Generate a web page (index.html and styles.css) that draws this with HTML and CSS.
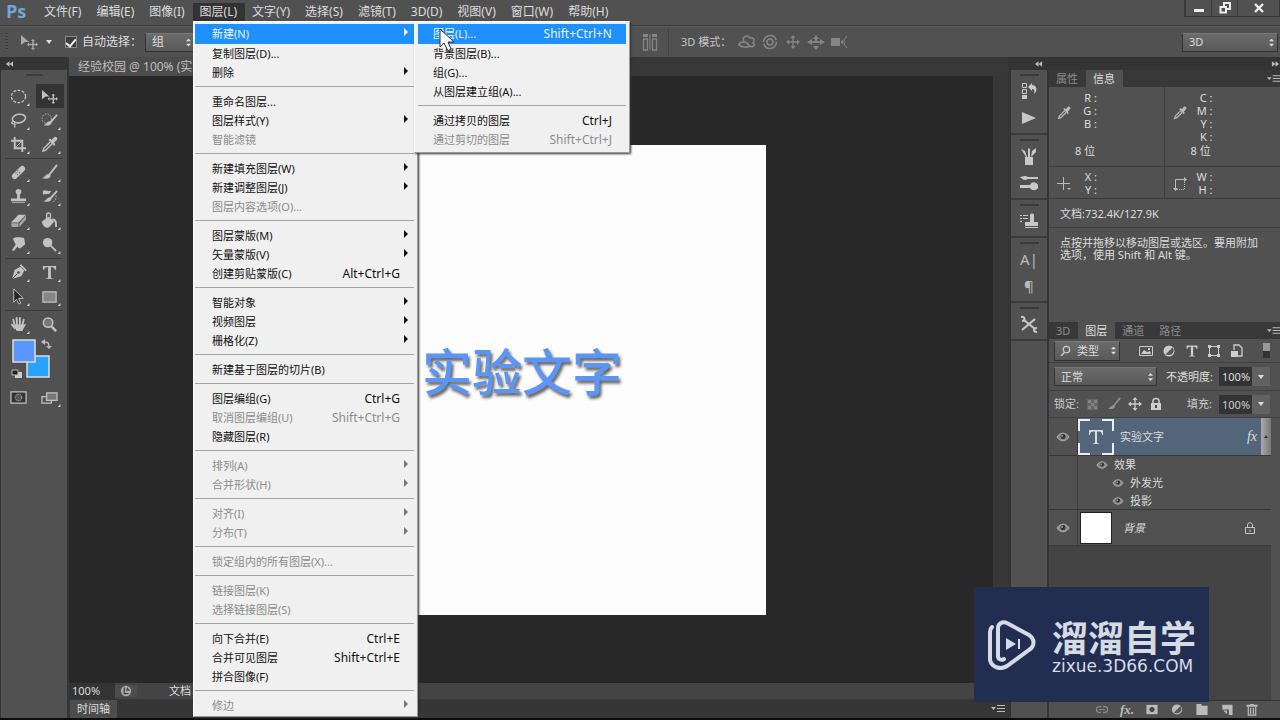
FILE: index.html
```html
<!DOCTYPE html>
<html lang="zh-CN">
<head>
<meta charset="utf-8">
<title>Photoshop</title>
<link rel="stylesheet" href="styles.css">
</head>
<body>
<svg class="sprite" aria-hidden="true">
  <symbol id="move" viewBox="0 0 18 18"><path fill="currentColor" d="M1 2l8 7H5L1 12z"/><path stroke="currentColor" stroke-width="1.4" d="M13 7v9M9 11.500h8"/><path fill="currentColor" d="M11 8l2-2 2 2zM11 15h4l-2 2zM9 9.500v4l-2-2zM16 9.500v4l2-2z"/></symbol>
  <symbol id="marquee" viewBox="0 0 18 18"><ellipse cx="9" cy="9" rx="7.500" ry="6.500" fill="none" stroke="currentColor" stroke-width="1.400" stroke-dasharray="3 1.500"/></symbol>
  <symbol id="lasso" viewBox="0 0 18 18"><ellipse cx="9.500" cy="7" rx="7" ry="4.500" transform="rotate(-10 9 7)" fill="none" stroke="currentColor" stroke-width="1.600"/><path fill="none" stroke="currentColor" stroke-width="1.400" d="M3 10c-2 1-1 3 1 2.500s1 2 1 4"/></symbol>
  <symbol id="quick" viewBox="0 0 18 18"><circle cx="6" cy="7" r="5" fill="none" stroke="currentColor" stroke-dasharray="1.500 1.500"/><path stroke="currentColor" stroke-width="2" d="M17 3l-7 8"/><path fill="currentColor" d="M11 10c1 4-4 5-8 4 3-1 3-5 8-4z"/></symbol>
  <symbol id="crop" viewBox="0 0 18 18"><path fill="none" stroke="currentColor" stroke-width="2" d="M5 1v12h12M1 5h12v12"/><path stroke="currentColor" d="M5 13l8-8"/></symbol>
  <symbol id="dropper" viewBox="0 0 18 18"><path fill="none" stroke="currentColor" stroke-width="1.500" d="M10 6l-7 7-1 3 3-1 7-7"/><path fill="currentColor" d="M8 4l1.500-1 2 1 2.500-3c2-1 4 1 3 3l-3 3 1 2-1 1.500z"/></symbol>
  <symbol id="bandage" viewBox="0 0 18 18"><path stroke="currentColor" stroke-width="6" stroke-linecap="round" d="M5 13l8-8"/><path stroke="#666" stroke-width="1.500" stroke-dasharray="1 1.500" d="M6 9l4 4M8 7l4 4"/></symbol>
  <symbol id="brush" viewBox="0 0 18 18"><path stroke="currentColor" stroke-width="2" d="M17 1l-8 10"/><path fill="currentColor" d="M10 11c1 5-5 5-9 4 4-1 4-6 9-4z"/></symbol>
  <symbol id="stamp" viewBox="0 0 18 18"><circle cx="9" cy="4" r="3" fill="currentColor"/><path fill="currentColor" d="M7.500 5h3v6H17v3H1v-3h6.500zM2 15h14v1H2z"/></symbol>
  <symbol id="history" viewBox="0 0 18 18"><path stroke="currentColor" stroke-width="2" d="M17 3l-7 8"/><path fill="currentColor" d="M11 10c1 5-5 5-9 4 4 0 4-5 9-4zM2 3c3-2 5 1 9 0l-2 3-7 1z"/><path fill="none" stroke="currentColor" stroke-dasharray="1.500 1.500" d="M16 8c0 5-2 6-4 7"/></symbol>
  <symbol id="eraser" viewBox="0 0 18 18"><path fill="currentColor" d="M9 3h8l-8 8H1z"/><path fill="currentColor" opacity=".75" d="M1 12h8v4H2zM10 12l7-8v4l-7 8z"/></symbol>
  <symbol id="bucket" viewBox="0 0 18 18"><path fill="currentColor" d="M1 10l7-5 6 5-5 6c-3 2-8-1-8-6z"/><path fill="none" stroke="currentColor" stroke-width="1.500" d="M6 8V3c0-3 4-2 4 0v4"/><path fill="none" stroke="currentColor" stroke-width="2" d="M12 8c4 0 4 3 4 8"/></symbol>
  <symbol id="smudge" viewBox="0 0 18 18"><path fill="currentColor" d="M3 3c4-3 9-1 12-1l1 7-5 4c-2 0-3-1-3-2l-4 5-2-1 4-6z"/></symbol>
  <symbol id="dodge" viewBox="0 0 18 18"><circle cx="7" cy="7" r="5" fill="currentColor"/><path stroke="currentColor" stroke-width="2" d="M10 10l6 6"/></symbol>
  <symbol id="pen" viewBox="0 0 18 18"><path fill="currentColor" d="M2 16l3-10 6-3 4 4-3 6z"/><path stroke="#444" d="M2 16l6-6"/><circle cx="9" cy="9" r="1.300" fill="#444"/><path stroke="currentColor" stroke-width="2" d="M11 1l6 6"/></symbol>
  <symbol id="type" viewBox="0 0 18 18"><path fill="currentColor" d="M2 2h14v4h-1.500c0-2-1-2.500-4-2.500V14c0 1 .5 1.300 2.500 1.300V16H5v-.7c2 0 2.500-.3 2.500-1.300V3.500c-3 0-4 .5-4 2.500H2z"/></symbol>
  <symbol id="path" viewBox="0 0 18 18"><path fill="#252525" stroke="currentColor" d="M4 1v14l3-3 2.500 5 2-1L9 11h5z"/></symbol>
  <symbol id="rect" viewBox="0 0 18 18"><path fill="#858585" stroke="currentColor" stroke-width="1.300" d="M2 4h14v11H2z"/></symbol>
  <symbol id="hand" viewBox="0 0 18 18"><path fill="none" stroke="currentColor" stroke-width="2" stroke-linecap="round" d="M5 10L3.500 4M7.500 9L7 2M10.500 9V2M13 10l1.500-6M5 13L2 9"/><path fill="currentColor" d="M4 9h10c2 0 2-1 3-.5L13 16H7z"/></symbol>
  <symbol id="zoom" viewBox="0 0 18 18"><circle cx="7.500" cy="7" r="5" fill="#777" stroke="currentColor" stroke-width="1.600"/><path stroke="currentColor" stroke-width="2.600" d="M11 11l5 5"/></symbol>
  <symbol id="eye" viewBox="0 0 14 14"><path fill="#8a8a8a" stroke="#b0b0b0" d="M1 7c3-5 9-5 12 0-3 5-9 5-12 0z"/><circle cx="7" cy="6.500" r="2.500" fill="#333"/><circle cx="6" cy="6" r=".8" fill="#ddd"/></symbol>
  <symbol id="lock" viewBox="0 0 14 14"><path fill="none" stroke="currentColor" stroke-width="1.500" d="M4 7V4c0-3.500 6-3.500 6 0v3"/><path fill="currentColor" d="M2 6h10v7H2z"/><path fill="#444" d="M6 8h2v3H6z"/></symbol>
  <symbol id="lockline" viewBox="0 0 14 14"><path fill="none" stroke="currentColor" d="M4.500 6V4c0-3 5-3 5 0v2M2.500 6.500h9v6h-9zM7 8.500v2.500"/></symbol>
  <symbol id="cross4" viewBox="0 0 14 14"><path stroke="currentColor" stroke-width="1.300" d="M7 2v10M2 7h10"/><path fill="currentColor" d="M4.500 3L7 0l2.500 3zM4.500 11h5L7 14zM3 4.500v5L0 7zM11 4.500v5L14 7z"/></symbol>
  <symbol id="half" viewBox="0 0 14 14"><circle cx="7" cy="7" r="5.500" fill="currentColor"/><path fill="#555" d="M3.500 10.500l7-7c3 3 0 8-4 7.500z"/></symbol>
  <symbol id="chev" viewBox="0 0 10 8"><path fill="currentColor" d="M5 1v6L1 4zM9 1v6L5 4z"/></symbol>
  <symbol id="flyout" viewBox="0 0 14 10"><path fill="currentColor" d="M0 3h5L2.500 6zM6 1h8v1H6zM6 4h8v1H6zM6 7h8v1H6z"/></symbol>
</svg>

<div class="app">
  <header class="menubar">
    <span class="brand">Ps</span>
    <nav class="menus">
      <button>文件(F)</button><button>编辑(E)</button><button>图像(I)</button><button class="open">图层(L)</button><button>文字(Y)</button><button>选择(S)</button><button>滤镜(T)</button><button>3D(D)</button><button>视图(V)</button><button>窗口(W)</button><button>帮助(H)</button>
    </nav>
    <div class="winbtns">
      <button aria-label="最小化"><svg viewBox="0 0 12 12"><path fill="#eee" d="M1 7h10v3H1z"/></svg></button>
      <button aria-label="还原"><svg viewBox="0 0 12 12"><path fill="none" stroke="#eee" stroke-width="2" d="M5 4V1h6v6H8M1.500 5H7v5.500H1.500z"/></svg></button>
      <button class="close" aria-label="关闭"><svg viewBox="0 0 12 12"><path stroke="#eee" stroke-width="2.400" d="M2 2l8 8M10 2l-8 8"/></svg></button>
    </div>
  </header>

  <div class="options">
    <span class="handle"></span>
    <svg class="i18 toolicon"><use href="#move"/></svg>
    <span class="down"></span>
    <label class="auto"><input type="checkbox" checked>自动选择：</label>
    <div class="pick group"><select aria-label="自动选择"><option>组</option></select></div>
    <div class="opts3d">
      <svg class="i18" viewBox="0 0 18 18"><path fill="none" stroke="currentColor" stroke-width="1.300" d="M2.500 6h4v11h-4zM11.500 6h4v11h-4z"/><path fill="currentColor" d="M2 1h5v3H2zM11 1h5v3h-5zM8.500 1h1v16h-1z"/></svg>
      <span class="vline"></span>
      <span class="mode">3D 模式：</span>
      <svg class="i18" viewBox="0 0 18 18"><path fill="none" stroke="currentColor" stroke-width="1.600" d="M6 9c-3-5 3-8 6-4 4-1 5 3 3 5 3 2 0 5-3 3-3 2-8 1-11-1 0-3 8-5 10 1"/></svg>
      <svg class="i18" viewBox="0 0 18 18"><circle cx="9" cy="9" r="6.500" fill="none" stroke="currentColor" stroke-width="1.500" stroke-dasharray="18 2"/><circle cx="9" cy="9" r="3" fill="none" stroke="currentColor" stroke-width="1.600"/></svg>
      <svg class="i18" viewBox="-2 -2 18 18"><use href="#cross4" width="14" height="14"/></svg>
      <svg class="i18" viewBox="0 0 18 18"><path fill="currentColor" d="M0 9l5-3v2h3V6H6l3-4 3 4h-2v2h3V6l5 3-5 3v-2H5v2zM6 13h6l-3 4z"/></svg>
      <svg class="i18" viewBox="0 0 18 18"><path fill="currentColor" d="M1 5h9v8H1zM11 8l2-1v4l-2-1z"/><path fill="none" stroke="currentColor" d="M17 3l-3 4v4l3 4"/></svg>
    </div>
    <div class="pick space"><select aria-label="工作区"><option>3D</option></select></div>
  </div>

  <div class="work">
    <aside class="toolbox">
      <div class="dockhead left"><svg><use href="#chev"/></svg></div>
      <div class="grip"></div>
      <div class="tools">
        <button class="sub" aria-label="椭圆选框"><svg><use href="#marquee"/></svg></button><button class="active" aria-label="移动"><svg><use href="#move"/></svg></button>
        <button class="sub" aria-label="套索"><svg><use href="#lasso"/></svg></button><button class="sub" aria-label="快速选择"><svg><use href="#quick"/></svg></button>
        <button class="sub" aria-label="裁剪"><svg><use href="#crop"/></svg></button><button class="sub" aria-label="吸管"><svg><use href="#dropper"/></svg></button>
      </div>
      <div class="tools">
        <button class="sub" aria-label="修复画笔"><svg><use href="#bandage"/></svg></button><button class="sub" aria-label="画笔"><svg><use href="#brush"/></svg></button>
        <button class="sub" aria-label="图章"><svg><use href="#stamp"/></svg></button><button class="sub" aria-label="历史画笔"><svg><use href="#history"/></svg></button>
        <button class="sub" aria-label="橡皮擦"><svg><use href="#eraser"/></svg></button><button class="sub" aria-label="油漆桶"><svg><use href="#bucket"/></svg></button>
        <button class="sub" aria-label="涂抹"><svg><use href="#smudge"/></svg></button><button class="sub" aria-label="减淡"><svg><use href="#dodge"/></svg></button>
      </div>
      <div class="tools">
        <button class="sub" aria-label="钢笔"><svg><use href="#pen"/></svg></button><button class="sub" aria-label="横排文字"><svg><use href="#type"/></svg></button>
        <button class="sub" aria-label="路径选择"><svg><use href="#path"/></svg></button><button class="sub" aria-label="矩形"><svg><use href="#rect"/></svg></button>
      </div>
      <div class="tools last">
        <button class="sub" aria-label="抓手"><svg><use href="#hand"/></svg></button><button aria-label="缩放"><svg><use href="#zoom"/></svg></button>
      </div>
      <svg class="swatches" viewBox="0 0 48 42"><path fill="#29a3ff" stroke="#ddd" stroke-width="1.500" d="M19 18h22v21H19z"/><path fill="#5b96ff" stroke="#ddd" stroke-width="1.500" d="M5 2h22v22H5z"/><path fill="none" stroke="#bbb" stroke-width="1.500" d="M36 4c4 0 5 1 5 5"/><path fill="#bbb" d="M37 1v6l-4-3zM38 8h6l-3 3z"/><path fill="#ccc" d="M7 34h7v6H7z"/><path fill="#222" stroke="#bbb" d="M4 32h6v5H4z"/></svg>
      <div class="tools last modes">
        <button aria-label="快速蒙版"><svg viewBox="0 0 18 18"><path fill="#333" stroke="currentColor" stroke-width="1.300" d="M1 3h16v12H1z"/><circle cx="9" cy="9" r="3.500" fill="#555" stroke="currentColor" stroke-dasharray="1.500 1"/></svg></button>
        <button class="sub" aria-label="屏幕模式"><svg viewBox="0 0 18 18"><path fill="#555" stroke="currentColor" stroke-width="1.300" d="M1 8h10v7H1z"/><path fill="#777" stroke="currentColor" stroke-width="1.300" d="M6 4h11v8H6z"/></svg></button>
      </div>
    </aside>

    <main class="doc">
      <div class="doctabs"><span class="doctab">经验校园 @ 100% (实</span></div>
      <div class="stage">
        <div class="backdrop"><div class="art"><span>实验文字</span></div></div>
        <div class="vscroll"></div>
      </div>
      <div class="status"><span class="pct">100%</span><span class="stico"><svg viewBox="0 0 14 14"><circle cx="7" cy="7" r="6" fill="#aaa"/><path fill="none" stroke="#444" stroke-width="1.500" d="M5 3v7h5M7 6h4M8 3l2 3"/></svg></span><span class="info">文档</span></div>
      <div class="timeline"><button class="tltab">时间轴</button><svg class="fly"><use href="#flyout"/></svg></div>
    </main>

    <aside class="icondock">
      <div class="dockhead"><svg><use href="#chev"/></svg></div>
      <div class="set"><i></i>
        <button aria-label="历史记录"><svg viewBox="0 0 18 18"><path fill="none" stroke="currentColor" d="M2.500 1.500h4v4h-4zM2.500 7.500h4v4h-4z"/><path fill="currentColor" d="M2 13h5v4H2zM8 5l4-4v2c5 0 6 6 2 9 1-3 0-5-2-5v2z"/></svg></button>
        <button aria-label="动作"><svg viewBox="0 0 18 18"><path fill="currentColor" d="M2 3l14 6-14 6z"/></svg></button></div>
      <div class="set"><i></i>
        <button aria-label="画笔预设"><svg viewBox="0 0 18 18"><path fill="currentColor" d="M5 10h8v8H5zM1 2l4 2 2 6H6zM8 1l2 1v8H8zM12 4l4-3v4l-5 5z"/></svg></button>
        <button aria-label="画笔"><svg viewBox="0 0 18 18"><path fill="currentColor" d="M0 3c3 0 4-2 8 0h10v2H8c-3 2-5 1-8-2zM0 11h10c2-4 6-3 8 0v3c-2 3-6 3-8 0H0z"/></svg></button></div>
      <div class="set"><i></i>
        <button aria-label="仿制源"><svg viewBox="0 0 18 18"><path fill="currentColor" d="M0 3h2v1H0zM3 3h5v1H3zM0 6h2v1H0zM3 6h5v1H3zM0 9h2v1H0zM10 3c0-2 4-2 4 0v7h4v4H5v-4h5zM5 15h13v1H5z"/></svg></button></div>
      <div class="set"><i></i>
        <button class="glyph">A|</button>
        <button class="glyph">¶</button></div>
      <div class="set"><i></i>
        <button aria-label="工具预设"><svg viewBox="0 0 18 18"><path fill="none" stroke="currentColor" stroke-width="2.200" d="M2 15L15 4M4 5l11 9"/><path fill="none" stroke="currentColor" stroke-width="2" d="M1 2c4-1 5 4 1 4M17 17c-4 0-4-4 0-4"/></svg></button></div>
    </aside>

    <aside class="panels">
      <div class="dockhead right"><svg class="flip"><use href="#chev"/></svg></div>
      <div class="tabs"><button>属性</button><button class="on">信息</button><svg class="fly"><use href="#flyout"/></svg></div>
      <div class="infogrid">
        <div class="cell"><svg class="i14"><use href="#dropper"/></svg><dl><dt>R :</dt><dt>G :</dt><dt>B :</dt><dt>&nbsp;</dt></dl><p>8 位</p></div>
        <div class="cell"><svg class="i14"><use href="#dropper"/></svg><dl><dt>C :</dt><dt>M :</dt><dt>Y :</dt><dt>K :</dt></dl><p>8 位</p></div>
        <div class="cell short"><svg class="i14" viewBox="0 0 14 14"><path stroke="currentColor" d="M6.500 0v13M0 6.500h13"/><path fill="currentColor" d="M10 11h4l-2 2z"/></svg><dl><dt>X :</dt><dt>Y :</dt></dl></div>
        <div class="cell short"><svg class="i14" viewBox="0 0 14 14"><path fill="none" stroke="currentColor" d="M2.500 12V2.500H12"/><path fill="none" stroke="currentColor" stroke-dasharray="1 1" d="M11.500 5v7.500H4"/><path fill="currentColor" d="M0 11h5l-2.500 3zM11 0v5l3-2.500z"/></svg><dl><dt>W :</dt><dt>H :</dt></dl></div>
      </div>
      <div class="docsize">文档:732.4K/127.9K</div>
      <p class="hint">点按并拖移以移动图层或选区。要用附加选项，使用 Shift 和 Alt 键。</p>

      <div class="tabs"><button>3D</button><button class="on">图层</button><button>通道</button><button>路径</button><svg class="fly"><use href="#flyout"/></svg></div>
      <div class="row filter">
        <div class="pick kind"><svg viewBox="0 0 12 12"><circle cx="7" cy="5" r="3.500" fill="none" stroke="#ccc" stroke-width="1.400"/><path stroke="#ccc" stroke-width="1.600" d="M5 8l-4 4"/></svg><select aria-label="筛选"><option>类型</option></select></div>
        <div class="filters">
          <svg class="i14" viewBox="0 0 14 14"><path fill="none" stroke="currentColor" d="M.5 2.500h13v9H.5z"/><path fill="currentColor" d="M2 10l3-4 3 2 3-1 1 3zM9 4h2v2H9z"/></svg>
          <svg class="i14"><use href="#half"/></svg>
          <svg class="i14"><use href="#type"/></svg>
          <svg class="i14" viewBox="0 0 14 14"><path fill="none" stroke="currentColor" d="M2.500 2.500h9v9h-9z"/><path fill="currentColor" d="M1 1h3v3H1zM10 1h3v3h-3zM1 10h3v3H1zM10 10h3v3h-3z"/></svg>
          <svg class="i14" viewBox="0 0 14 14"><path fill="none" stroke="currentColor" stroke-width="1.300" d="M4 6V1h5l3 3v8H8"/><path fill="currentColor" d="M1 7h7v6H1z"/></svg>
        </div>
        <span class="toggle"></span>
      </div>
      <div class="row blend">
        <div class="pick mode2"><select aria-label="混合模式"><option>正常</option></select></div>
        <label for="op">不透明度:</label><span class="num"><input id="op" value="100%"><button aria-label="不透明度滑块"><span class="down"></span></button></span>
      </div>
      <div class="row locks">
        <span>锁定:</span>
        <svg class="i14 dim" viewBox="0 0 14 14"><path fill="#777" d="M1 2h11v11H1z"/><path fill="#aaa" d="M2 3h3v3H2zM8 3h3v3H8zM5 6h3v3H5zM2 9h3v3H2zM8 9h3v3H8z"/></svg>
        <svg class="i14 dim"><use href="#brush"/></svg>
        <svg class="i14"><use href="#cross4"/></svg>
        <svg class="i14"><use href="#lock"/></svg>
        <label for="fill">填充:</label><span class="num"><input id="fill" value="100%"><button aria-label="填充滑块"><span class="down"></span></button></span>
      </div>
      <div class="layers">
        <div class="layer sel"><span class="eye"><svg class="i14"><use href="#eye"/></svg></span>
          <svg class="thumb" viewBox="0 0 36 36"><path fill="none" stroke="#eee" stroke-width="2" d="M1 12V1h11M24 1h11v11M35 24v11H24M12 35H1V24"/><path fill="#ddd" d="M11 11h14v5h-1c0-3-1-3.500-5-3.500V23c0 1.500 1 1.500 2.500 1.500V25h-7v-.5c1.500 0 2.500 0 2.500-1.500V12.500c-4 0-5 .5-5 3.500h-1z"/></svg>
          <span class="name">实验文字</span><em class="fx">fx</em><span class="more"></span></div>
        <div class="fxlist"><span class="eye"></span>
          <ul><li><svg class="i14"><use href="#eye"/></svg>效果</li><li class="in"><svg class="i14"><use href="#eye"/></svg>外发光</li><li class="in"><svg class="i14"><use href="#eye"/></svg>投影</li></ul></div>
        <div class="layer bg"><span class="eye"><svg class="i14"><use href="#eye"/></svg></span><span class="white"></span><span class="name"><i>背景</i></span><svg class="i14 lk"><use href="#lockline"/></svg></div>
      </div>
      <div class="layerbar">
        <button aria-label="链接图层"><svg class="dim" viewBox="0 0 14 14"><path fill="none" stroke="currentColor" stroke-width="1.300" d="M6 4H4C0 4 0 10 4 10h2M8 4h2c4 0 4 6 0 6H8M4 7h6"/></svg></button>
        <button class="fxbtn">fx.</button>
        <button aria-label="蒙版"><svg viewBox="0 0 14 14"><path fill="currentColor" d="M1 2h12v10H1z"/><circle cx="7" cy="7" r="2.700" fill="#444"/></svg></button>
        <button aria-label="调整"><svg><use href="#half"/></svg></button>
        <button aria-label="组"><svg viewBox="0 0 14 14"><path fill="currentColor" d="M1 3V1h5l1 2h6v10H1z"/></svg></button>
        <button aria-label="新建图层"><svg viewBox="0 0 14 14"><path fill="currentColor" d="M2 2h11v11H9V7H2zM3 8h4v4z"/></svg></button>
        <button aria-label="删除"><svg viewBox="0 0 14 14"><path fill="currentColor" d="M1 2h4V1h4v1h4v2H1z"/><path fill="none" stroke="currentColor" stroke-width="1.300" d="M3 4v9h8V4M5.500 5v7M8.500 5v7"/></svg></button>
      </div>
    </aside>
  </div>
</div>

<ul class="popup main">
  <li class="hot more-r"><button>新建(N)</button></li><li><button>复制图层(D)...</button></li><li class="more-r"><button>删除</button></li>
  <li class="sep"></li>
  <li><button>重命名图层...</button></li><li class="more-r"><button>图层样式(Y)</button></li><li><button disabled>智能滤镜</button></li>
  <li class="sep"></li>
  <li class="more-r"><button>新建填充图层(W)</button></li><li class="more-r"><button>新建调整图层(J)</button></li><li><button disabled>图层内容选项(O)...</button></li>
  <li class="sep"></li>
  <li class="more-r"><button>图层蒙版(M)</button></li><li class="more-r"><button>矢量蒙版(V)</button></li><li><button>创建剪贴蒙版(C)<kbd>Alt+Ctrl+G</kbd></button></li>
  <li class="sep"></li>
  <li class="more-r"><button>智能对象</button></li><li class="more-r"><button>视频图层</button></li><li class="more-r"><button>栅格化(Z)</button></li>
  <li class="sep"></li>
  <li><button>新建基于图层的切片(B)</button></li>
  <li class="sep"></li>
  <li><button>图层编组(G)<kbd>Ctrl+G</kbd></button></li><li><button disabled>取消图层编组(U)<kbd>Shift+Ctrl+G</kbd></button></li><li><button>隐藏图层(R)</button></li>
  <li class="sep"></li>
  <li class="more-r"><button disabled>排列(A)</button></li><li class="more-r"><button disabled>合并形状(H)</button></li>
  <li class="sep"></li>
  <li class="more-r"><button disabled>对齐(I)</button></li><li class="more-r"><button disabled>分布(T)</button></li>
  <li class="sep"></li>
  <li><button disabled>锁定组内的所有图层(X)...</button></li>
  <li class="sep"></li>
  <li><button disabled>链接图层(K)</button></li><li><button disabled>选择链接图层(S)</button></li>
  <li class="sep"></li>
  <li><button>向下合并(E)<kbd>Ctrl+E</kbd></button></li><li><button>合并可见图层<kbd>Shift+Ctrl+E</kbd></button></li><li><button>拼合图像(F)</button></li>
  <li class="sep"></li>
  <li class="more-r"><button disabled>修边</button></li>
</ul>

<ul class="popup second">
  <li class="hot"><button>图层(L)...<kbd>Shift+Ctrl+N</kbd></button></li><li><button>背景图层(B)...</button></li><li><button>组(G)...</button></li><li><button>从图层建立组(A)...</button></li>
  <li class="sep"></li>
  <li><button>通过拷贝的图层<kbd>Ctrl+J</kbd></button></li><li><button disabled>通过剪切的图层<kbd>Shift+Ctrl+J</kbd></button></li>
</ul>

<svg class="cursor" viewBox="0 0 16 24"><path fill="#fff" stroke="#333" d="M1 1v18l4-4 4 8 3-2-3-7h6z"/></svg>

<div class="watermark">
  <svg viewBox="0 0 48 50"><path fill="none" stroke="#d6dae4" stroke-width="4" stroke-linecap="round" d="M16 39c-3 2-6 0-6-3V8c0-4 4-7 9-5l22 12c6 4 6 11 0 15L19 46c-6 4-15 2-17-6V12c0-3 1-4 2-5"/><path fill="#d6dae4" d="M18 18l10 6-10 6zM30 19h2v10h-2z"/></svg>
  <div class="wtext"><strong>溜溜自学</strong><span>zixue.3D66.COM</span></div>
</div>
</body>
</html>
```

FILE: styles.css
```css
* { box-sizing: border-box; }
body { margin: 0; overflow: hidden; font: 12px/16px "Noto Sans", "Noto Sans CJK SC", sans-serif; color: #ddd; background: #0c0c0c; }
button, input, select { font: inherit; color: inherit; margin: 0; padding: 0; border: 0; background: none; border-radius: 0; }
ul, dl, p { margin: 0; padding: 0; list-style: none; }
svg { display: block; flex: none; }
.sprite { position: absolute; width: 0; height: 0; }
.i18 { width: 18px; height: 18px; }
.i14 { width: 14px; height: 14px; }
.dim { opacity: .55; }
.down { border: 3px solid transparent; border-top: 4px solid #ddd; border-bottom: 0; width: 6px; }

.app { height: 100vh; display: flex; flex-direction: column; padding-bottom: 2px; }

.menubar { height: 26px; flex: none; display: flex; background: #515151; border-bottom: 1px solid #383838; }
.brand { width: 37px; padding: 0 0 0 6px; font: bold 18px/23px "Open Sans", sans-serif; color: #6fa6d6; }
.menus { display: flex; flex: 1; align-items: flex-start; }
.menus button { height: 18px; margin-top: 3px; padding: 0 8px 0 7px; line-height: 18px; white-space: nowrap; }
.menus .open { background: #333; }
.winbtns { display: flex; height: 17px; border: 1px solid #383838; border-top: 0; }
.winbtns button { width: 26px; display: flex; align-items: center; justify-content: center; border-left: 1px solid #3b3b3b; }
.winbtns .close { width: 42px; }
.winbtns svg { width: 12px; height: 12px; }

.options { height: 31px; flex: none; display: flex; align-items: center; background: #515151; border-top: 1px solid #5e5e5e; padding: 0 2px 0 5px; }
.handle { width: 3px; height: 18px; background: repeating-linear-gradient(#3a3a3a 0 1px, #555 1px 3px); }
.toolicon { margin: 0 8px 0 12px; color: #aaa; }
.auto { display: flex; align-items: center; gap: 5px; margin-left: 13px; width: 80px; white-space: nowrap; }
.auto input { appearance: none; width: 12px; height: 12px; background: #3c3c3c; border: 1px solid #888; display: grid; place-items: center; }
.auto input::after { content: ""; width: 4px; height: 8px; border: solid #eee; border-width: 0 2px 2px 0; transform: rotate(40deg); }
.pick { display: flex; align-items: center; position: relative; height: 19px; background: linear-gradient(#6b6b6b, #595959); border: 1px solid #333; border-top-color: #777; }
.pick select { appearance: none; flex: 1; width: 100%; height: 17px; padding: 0 6px; line-height: 16px; }
.pick::after { content: ""; position: absolute; right: 3px; top: 5px; width: 5px; height: 8px; background: #ddd; clip-path: polygon(50% 0, 100% 35%, 0 35%, 0 65%, 100% 65%, 50% 100%, 0 65%, 0 35%); }
.group { width: 50px; }
.opts3d { margin-left: 446px; display: flex; align-items: center; gap: 5px; color: #858585; }
.vline { width: 1px; height: 28px; margin: 0 7px 0 4px; background: #424242; }
.mode { font-size: 11px; color: #c4c4c4; width: 52px; white-space: nowrap; }
.space { width: 96px; margin-left: auto; font-size: 11px; }

.work { flex: 1; min-height: 0; display: flex; background: #353535; }
.dockhead { height: 13px; flex: none; padding: 3px 4px; display: flex; background: #343434; color: #bbb; }
.dockhead svg { width: 9px; height: 8px; }
.icondock .dockhead, .dockhead.right { justify-content: flex-end; }
.dockhead.right { padding-right: 0; }
.flip { transform: scaleX(-1); }

.toolbox { width: 67px; flex: none; background: #515151; color: #c2c2c2; border-left: 1px solid #333; }
.grip { width: 17px; height: 2px; margin: 4px auto 7px; background: #3d3d3d; }
.tools { display: grid; grid-template-columns: 28px 28px; grid-auto-rows: 24px; justify-content: center; column-gap: 3px; margin: 0 4px; padding: 1px 0 2px; border-bottom: 1px solid #3b3b3b; }
.tools.last { border: 0; }
.tools button { display: grid; place-items: center; position: relative; }
.tools svg { width: 17px; height: 17px; }
.tools .active { background: #343434; }
.tools .sub::after { content: ""; position: absolute; right: 3px; bottom: 2px; width: 3px; height: 3px; background: #ccc; clip-path: polygon(100% 0, 100% 100%, 0 100%); }
.swatches { width: 48px; height: 42px; margin: 0 0 4px 7px; }

.doc { flex: 1; min-width: 0; margin-left: 2px; display: flex; flex-direction: column; }
.doctabs { height: 19px; flex: none; display: flex; background: #383838; overflow: hidden; }
.doctab { padding: 2px 9px 0; background: #4c4c4c; color: #bfbfbf; white-space: nowrap; width: 240px; overflow: hidden; }
.stage { flex: 1; min-height: 0; display: flex; }
.backdrop { flex: 1; background: #282828; display: flex; align-items: center; justify-content: center; }
.art { width: 470px; aspect-ratio: 1; background: #fdfdfd; display: flex; align-items: center; justify-content: center; padding: 0 18px 22px 0; }
.art span { font: 500 50px/60px "Noto Sans CJK SC", sans-serif; color: #5b96f7; text-shadow: 2px 3px 3px #666; white-space: nowrap; }
.vscroll { width: 15px; background: #373737; }
.status { height: 16px; flex: none; display: flex; align-items: center; background: #444; font-size: 11px; }
.pct { width: 46px; padding-left: 3px; background: #333; }
.stico { width: 22px; display: flex; justify-content: center; background: #4d4d4d; }
.stico svg { width: 12px; height: 12px; }
.info { padding-left: 32px; }
.timeline { height: 19px; flex: none; display: flex; justify-content: space-between; align-items: center; padding: 1px 3px 0 1px; background: #363636; }
.tltab { height: 18px; padding: 0 7px; background: #4d4d4d; font-size: 11px; }
.fly { width: 14px; height: 10px; color: #bbb; }

.icondock { width: 38px; flex: none; margin-left: 2px; background: #515151; border: solid #333; border-width: 0 1px; color: #c8c8c8; }
.set { padding-bottom: 2px; border-bottom: 2px solid #3b3b3b; }
.set i { display: block; width: 19px; height: 2px; margin: 4px auto 1px; background: #3a3a3a; }
.set button { display: grid; place-items: center; width: 100%; height: 27px; }
.set svg { width: 18px; height: 18px; }
.set .glyph { font-size: 15px; color: #bbb; }

.panels { width: 231px; flex: none; margin-left: 1px; background: #515151; display: flex; flex-direction: column; }
.tabs { height: 17px; flex: none; display: flex; background: #383838; color: #8c8c8c; font-size: 11px; }
.tabs button { padding: 0 8px 0 7px; white-space: nowrap; }
.tabs .on { background: #515151; color: #ddd; }
.tabs .fly { margin: 4px 0 0 auto; width: 13px; }
.infogrid { display: grid; grid-template-columns: 1fr 1fr; }
.cell { padding: 4px 8px 7px; display: grid; grid-template-columns: 14px 20px; column-gap: 6px; border-bottom: 1px solid #3d3d3d; }
.cell:nth-child(odd) { border-right: 1px solid #3d3d3d; }
.cell svg { margin-top: 15px; color: #bbb; }
.cell dl { line-height: 13px; text-align: right; font-size: 11px; white-space: nowrap; }
.cell p { grid-column: 1 / 3; padding-left: 18px; line-height: 16px; font-size: 11px; white-space: nowrap; }
.cell.short { padding: 3px 8px 2px; }
.cell.short svg { margin-top: 7px; }
.docsize { height: 29px; flex: none; padding: 7px 11px; border-bottom: 1px solid #3d3d3d; font-size: 11px; }
.hint { height: 94px; flex: none; padding: 9px 15px 0 11px; font-size: 11px; line-height: 12px; }

.row { flex: none; display: flex; align-items: center; border-bottom: 1px solid #414141; padding: 0 10px 0 5px; font-size: 11px; }
.filter { height: 24px; }
.kind { width: 66px; height: 20px; padding-left: 5px; }
.kind svg { width: 11px; height: 11px; }
.filters { flex: 1; display: flex; justify-content: space-between; padding: 0 19px 0 19px; color: #ccc; }
.toggle { width: 7px; height: 15px; background: linear-gradient(#999 50%, #333 50%); }
.blend { height: 28px; }
.mode2 { width: 103px; }
.row label { margin: 0 6px 0 auto; white-space: nowrap; }
.num { display: flex; }
.num input { width: 33px; height: 19px; padding-left: 3px; background: #333; }
.num button { width: 18px; height: 19px; display: grid; place-items: center; background: #626262; }
.locks { height: 27px; gap: 7px; color: #ccc; }
.locks label { margin-right: 0; }

.layers { flex: 1; min-height: 0; margin-right: 9px; background: #444; }
.layer { display: flex; align-items: center; height: 38px; background: #515151; border-bottom: 1px solid #383838; }
.layer.bg { height: 36px; }
.eye { width: 29px; flex: none; align-self: stretch; display: grid; place-items: center; background: #515151; border-right: 1px solid #3b3b3b; }
.layer.sel { background: #53657a; }
.thumb { width: 36px; height: 36px; }
.name { flex: 1; padding-left: 6px; font-size: 11px; }
.fx { margin-right: 4px; font: italic 14px/18px "Liberation Serif", serif; }
.more { width: 10px; align-self: stretch; background: linear-gradient(90deg, #aaa, #777); display: grid; place-items: center; }
.more::after { content: ""; border: 2px solid transparent; border-bottom: 3px solid #333; border-top: 0; }
.fxlist { display: flex; height: 54px; background: #515151; border-bottom: 1px solid #383838; font-size: 11px; }
.fxlist li { display: flex; align-items: center; gap: 6px; height: 18px; padding-left: 18px; }
.fxlist .in { padding-left: 34px; }
.fxlist .i14 { width: 12px; }
.white { width: 30px; height: 30px; margin: 0 6px 0 3px; background: #fff; outline: 1px solid #222; }
.lk { margin-right: 14px; color: #c4c4c4; }
.layerbar { height: 18px; flex: none; display: flex; align-items: center; justify-content: flex-end; gap: 11px; padding-right: 21px; border-top: 1px solid #333; color: #bbb; }
.layerbar svg { width: 14px; height: 13px; }
.fxbtn { font: italic bold 13px/14px "Liberation Serif", serif; }

.popup { position: absolute; top: 21px; padding: 2px 3px 0 0; background: #f0f0f0; border: 1px solid #fff; border-right-color: #999; border-bottom-color: #999; box-shadow: 1px 1px 2px #333; color: #111; font-size: 11px; }
.main { left: 193px; width: 225px; padding-bottom: 1px; }
.second { left: 414px; width: 216px; padding-left: 2px; padding-bottom: 3px; }
.popup li { position: relative; margin-left: 1px; }
.popup button { display: flex; justify-content: space-between; width: 100%; height: 19px; line-height: 19px; padding: 0 14px 0 17px; white-space: nowrap; text-align: left; }
.popup.second button { padding-left: 15px; }
.popup button:disabled { color: #8c8c8c; }
.popup kbd { font: 12px/19px "Noto Sans", sans-serif; }
.popup .hot { background: #1e90ff; color: #e6f3ff; padding-bottom: 1px; }
.popup .sep { height: 10px; padding-top: 4px; }
.popup .sep::after { content: ""; display: block; height: 1px; background: #a3a3a3; }
.more-r::after { content: ""; position: absolute; right: 6px; top: 4px; border: 4px solid transparent; border-left-color: #111; border-right: 0; }
.more-r.hot::after { border-left-color: #fff; }
.more-r:has(:disabled)::after { border-left-color: #777; }

.cursor { position: absolute; left: 439px; top: 28px; width: 16px; height: 24px; }

.watermark { position: absolute; right: 71px; bottom: 18px; width: 235px; height: 115px; display: flex; align-items: center; gap: 16px; padding-left: 14px; background: #212e52; color: #d6dae4; }
.watermark svg { width: 48px; height: 50px; }
.wtext { display: flex; flex-direction: column; white-space: nowrap; }
.wtext strong { font: 700 36px/42px "Noto Sans CJK SC", sans-serif; }
.wtext span { font: 17px/18px "DejaVu Sans", sans-serif; }
```
